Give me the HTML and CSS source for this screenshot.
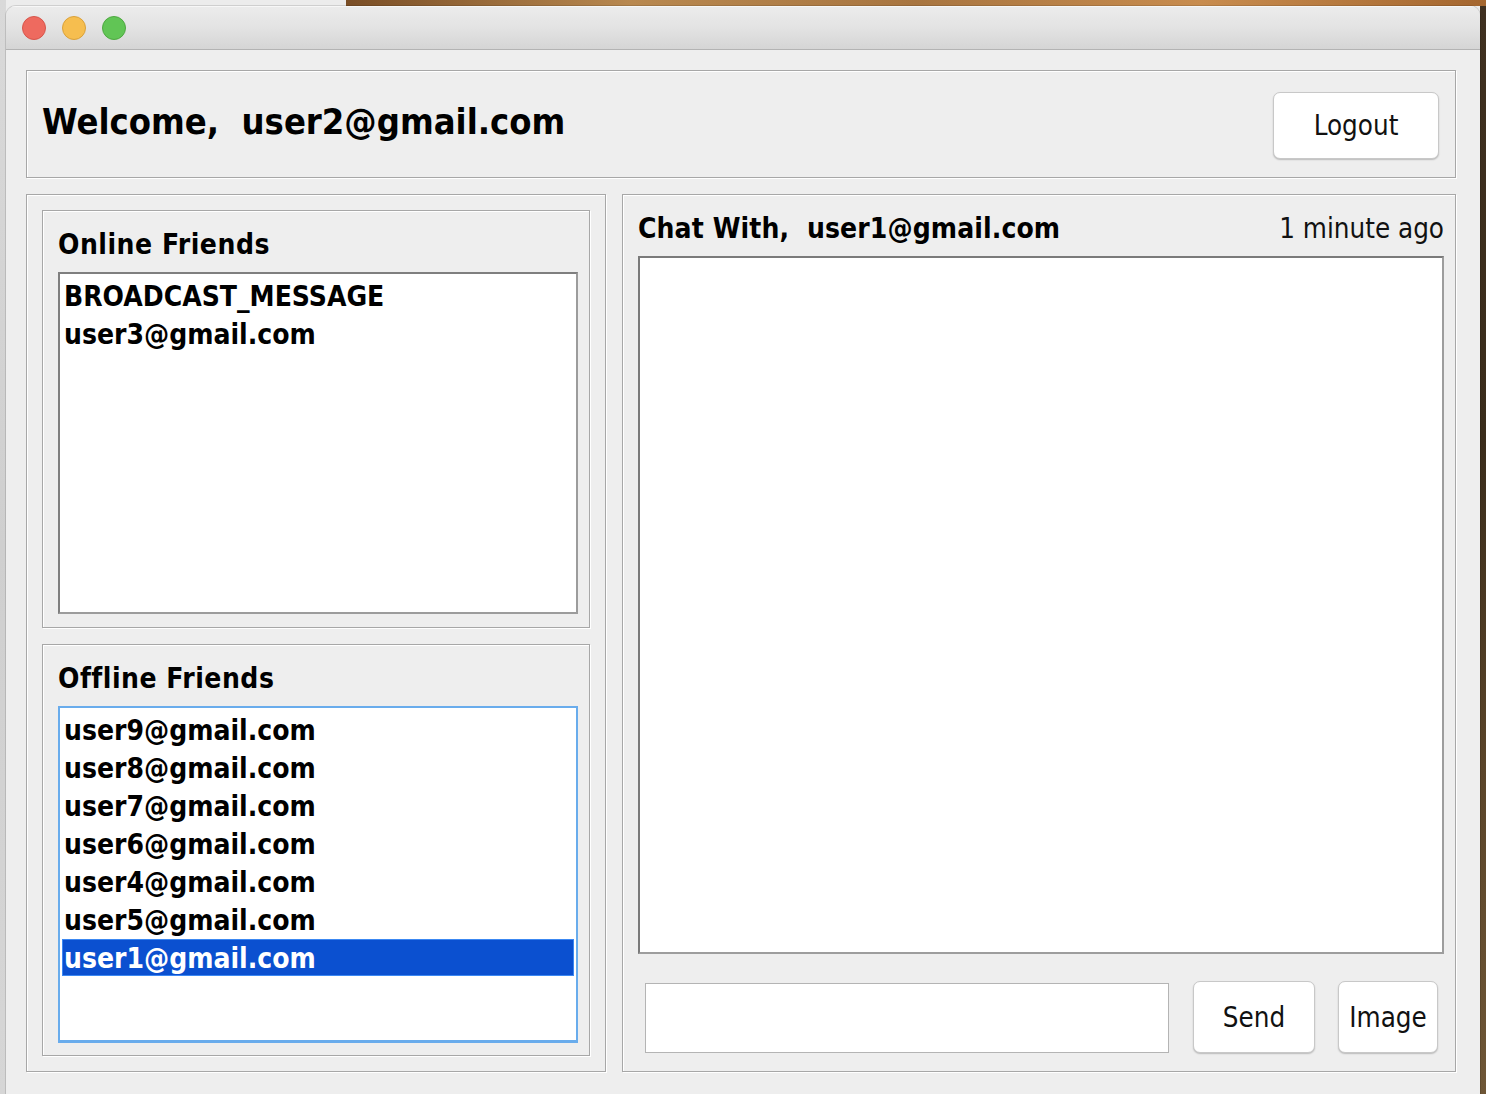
FILE: index.html
```html
<!DOCTYPE html>
<html lang="en">
<head>
<meta charset="utf-8">
<title>Chat</title>
<link rel="stylesheet" href="styles.css">
</head>
<body>
<div class="window">
  <div class="titlebar">
    <span class="light red"></span>
    <span class="light yellow"></span>
    <span class="light green"></span>
  </div>
  <div class="content">
    <div class="etched header">
      <h1 class="welcome">Welcome,&nbsp; user2@gmail.com</h1>
      <div class="btn logout">Logout</div>
    </div>
    <div class="main">
      <div class="etched left">
        <div class="etched group online">
          <div class="group-title">Online Friends</div>
          <div class="list">
            <div class="item">BROADCAST_MESSAGE</div>
            <div class="item">user3@gmail.com</div>
          </div>
        </div>
        <div class="etched group offline">
          <div class="group-title">Offline Friends</div>
          <div class="list focus">
            <div class="item">user9@gmail.com</div>
            <div class="item">user8@gmail.com</div>
            <div class="item">user7@gmail.com</div>
            <div class="item">user6@gmail.com</div>
            <div class="item">user4@gmail.com</div>
            <div class="item">user5@gmail.com</div>
            <div class="item selected">user1@gmail.com</div>
          </div>
        </div>
      </div>
      <div class="etched chat">
        <div class="chat-head">
          <span class="chat-title">Chat With,&nbsp; user1@gmail.com</span>
          <span class="ago">1 minute ago</span>
        </div>
        <div class="chat-area"></div>
        <div class="compose">
          <div class="input"></div>
          <div class="btn send">Send</div>
          <div class="btn image">Image</div>
        </div>
      </div>
    </div>
  </div>
</div>
</body>
</html>
```

FILE: styles.css
```css
html, body {
  margin: 0;
  height: 100%;
  overflow: hidden;
}

body {
  font-family: "DejaVu Sans Condensed", "DejaVu Sans", sans-serif;
  font-stretch: condensed;
  color: #000;
  background:
    linear-gradient(90deg, #7a4e26 0%, #b8884f 25%, #a87540 50%, #c88c4e 75%, #a4662f 100%) 346px 0 / 1140px 6px no-repeat,
    linear-gradient(180deg, #3f3020 0%, #3a2c1b 40%, #5a4429 70%, #6e5636 100%) right top / 6px 100% no-repeat,
    linear-gradient(180deg, #d9d9d9 0%, #cfcfcf 50%, #d6d6d6 100%) left top / 6px 100% no-repeat,
    #ececec;
}

.window {
  margin: 6px 6px 0 6px;
  height: 1088px;
  background: #eeeeee;
  border-radius: 10px 10px 0 0;
  overflow: hidden;
  box-shadow: 0 0 0 1px rgba(0, 0, 0, 0.12);
  display: flex;
  flex-direction: column;
}

.titlebar {
  flex: none;
  height: 43px;
  display: flex;
  align-items: center;
  gap: 16px;
  padding-left: 16px;
  background: linear-gradient(180deg, #ececec 0%, #e3e3e3 50%, #d5d5d5 100%);
  border-bottom: 1px solid #b3b3b3;
  box-shadow: inset 0 1px 0 #f7f7f7;
}

.light {
  width: 24px;
  height: 24px;
  border-radius: 50%;
  box-sizing: border-box;
  border: 1px solid;
}

.red { background: #ee6a5f; border-color: #d6564c; }
.yellow { background: #f6be4f; border-color: #d9a13b; }
.green { background: #61c555; border-color: #4ea841; }

.content {
  flex: 1;
  padding: 20px 24px 0 20px;
  display: flex;
  flex-direction: column;
  gap: 16px;
}

.etched {
  border: 1px solid #a7a7a7;
  box-shadow: inset 1px 1px 0 #ffffff, 1px 1px 0 #ffffff;
  background: #eeeeee;
  box-sizing: border-box;
}

.header {
  flex: none;
  height: 108px;
  display: flex;
  align-items: center;
  justify-content: space-between;
  padding: 0 16px 0 15px;
}

.welcome {
  margin: 0 0 5px 0;
  font-size: 36px;
  line-height: 40px;
  font-weight: bold;
  white-space: nowrap;
}

.btn {
  box-sizing: border-box;
  background: #ffffff;
  border: 1px solid #c8c8c8;
  border-radius: 7px;
  box-shadow: 0 1px 1.5px rgba(0, 0, 0, 0.22);
  display: flex;
  align-items: center;
  justify-content: center;
  font-size: 27.5px;
  color: #111;
}

.logout {
  width: 166px;
  height: 67px;
  margin-top: 2px;
}

.main {
  flex: none;
  height: 878px;
  display: flex;
  gap: 16px;
}

.left {
  width: 580px;
  flex: none;
  padding: 15px;
  display: flex;
  flex-direction: column;
  gap: 16px;
}

.group {
  display: flex;
  flex-direction: column;
  padding: 0 11px 0 15px;
}

.online {
  height: 418px;
  flex: none;
  padding-bottom: 13px;
}

.offline {
  flex: 1;
  padding-bottom: 12px;
}

.group-title {
  font-size: 28px;
  line-height: 30px;
  font-weight: bold;
  letter-spacing: 0.5px;
  margin: 19px 0 12px 0;
}

.list {
  flex: 1;
  background: #ffffff;
  border: 2px solid #9c9c9c;
  border-top-color: #7f7f7f;
  border-left-color: #7f7f7f;
  padding: 3px 2px;
}

.list.focus {
  border: 2px solid #69acec;
  border-bottom-width: 3px;
}

.item {
  height: 38px;
  line-height: 40px;
  padding-left: 2px;
  font-size: 28px;
  font-weight: bold;
  white-space: nowrap;
  overflow: hidden;
}

.item.selected {
  height: 37px;
  line-height: 39px;
  background: #0b50d0;
  color: #ffffff;
  box-shadow: inset 0 0 0 1px #3c88f2;
}

.chat {
  flex: 1;
  display: flex;
  flex-direction: column;
  padding: 0 11px 0 15px;
}

.chat-head {
  height: 30px;
  padding: 18px 0 13px 0;
  display: flex;
  align-items: center;
  justify-content: space-between;
  white-space: nowrap;
}

.chat-title {
  font-size: 28px;
  font-weight: bold;
  letter-spacing: 0.1px;
}

.ago {
  font-size: 27.5px;
  color: #111;
}

.chat-area {
  flex: none;
  height: 698px;
  box-sizing: border-box;
  background: #ffffff;
  border: 2px solid #9d9d9d;
  border-top-color: #7a7a7a;
  border-left-color: #7a7a7a;
}

.compose {
  display: flex;
  align-items: flex-end;
  padding-top: 27px;
  height: 72px;
}

.input {
  width: 524px;
  height: 70px;
  margin-left: 7px;
  box-sizing: border-box;
  background: #ffffff;
  border: 1px solid #b4b4b4;
}

.send {
  width: 122px;
  height: 72px;
  margin-left: 24px;
}

.image {
  width: 100px;
  height: 72px;
  margin-left: 23px;
}
```
